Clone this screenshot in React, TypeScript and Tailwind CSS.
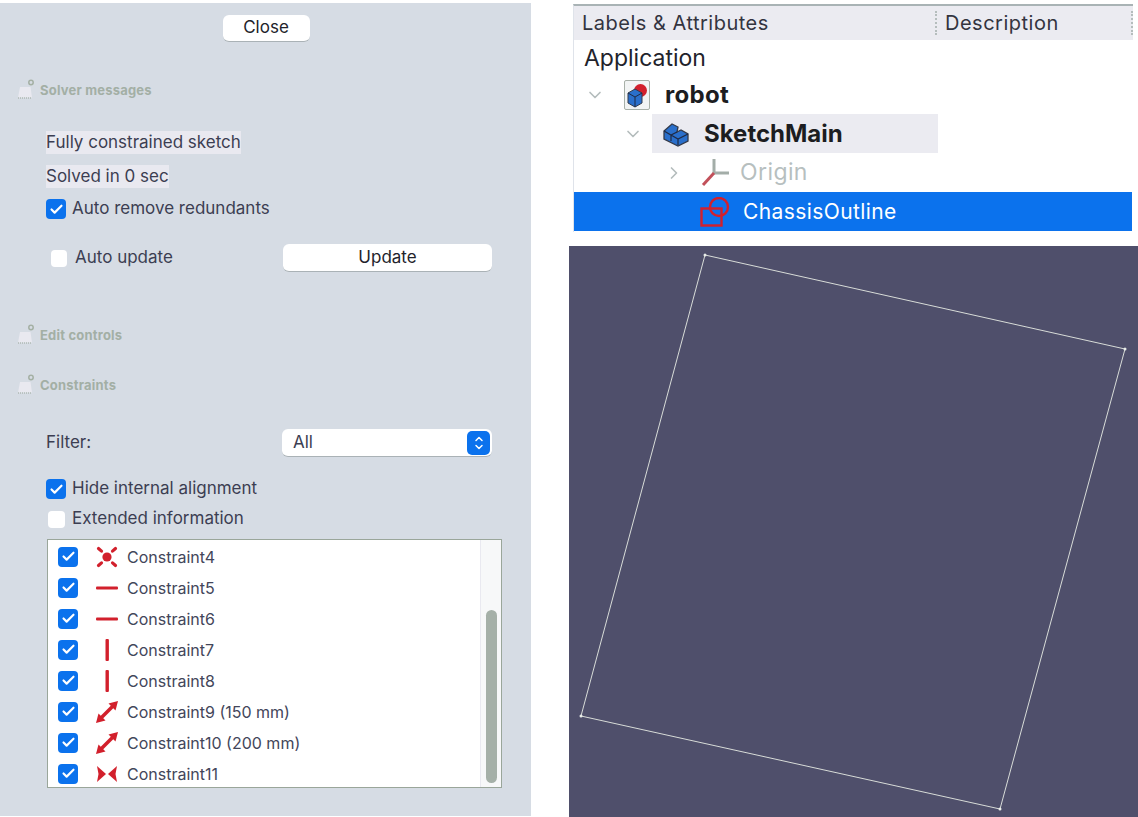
import { Check, ChevronDown, ChevronRight, ChevronUp } from 'lucide-react';

const constraints = [
  { name: 'Constraint4', icon: 'coincident' },
  { name: 'Constraint5', icon: 'horizontal' },
  { name: 'Constraint6', icon: 'horizontal' },
  { name: 'Constraint7', icon: 'vertical' },
  { name: 'Constraint8', icon: 'vertical' },
  { name: 'Constraint9 (150 mm)', icon: 'distance' },
  { name: 'Constraint10 (200 mm)', icon: 'distance' },
  { name: 'Constraint11', icon: 'symmetric' },
];

function ConstraintIcon({ type }: { type: string }) {
  return (
    <svg width="24" height="24" viewBox="0 0 24 24" className="shrink-0">
      {type === 'coincident' && (
        <g fill="#d2202c" stroke="#d2202c">
          <circle cx="12" cy="12" r="4.6" stroke="none" />
          <path d="M3.5 3.5l3 2.6M20.5 3.5l-3 2.6M3.5 20.5l3-2.6M20.5 20.5l-3-2.6" strokeWidth="3.2" strokeLinecap="round" />
        </g>
      )}
      {type === 'horizontal' && <rect x="1" y="10.5" width="22" height="3" rx="1" fill="#d2202c" />}
      {type === 'vertical' && <rect x="10.5" y="1" width="3.4" height="22" rx="1" fill="#d2202c" />}
      {type === 'distance' && (
        <g fill="#d2202c">
          <path d="M6 18L18 6" stroke="#d2202c" strokeWidth="3.6" />
          <path d="M23 1l-2.5 9.5-7-7z" />
          <path d="M1 23l2.5-9.5 7 7z" />
        </g>
      )}
      {type === 'symmetric' && (
        <g fill="#d2202c">
          <path d="M2 4l9 8-9 8 1.5-8z" />
          <path d="M22 4l-9 8 9 8-1.5-8z" />
        </g>
      )}
    </svg>
  );
}

function CheckBox({ checked, size = 'w-5 h-5' }: { checked: boolean; size?: string }) {
  if (!checked) return <div className={`${size} shrink-0 rounded-[4px] bg-white`} />;
  return (
    <div className={`${size} shrink-0 rounded-[4px] bg-[#0b72ed] flex items-center justify-center`}>
      <Check size={15} strokeWidth={3.4} color="#ffffff" />
    </div>
  );
}

function SectionHeader({ label, className }: { label: string; className: string }) {
  return (
    <div className={`flex items-end gap-[5px] pl-[17px] ${className}`}>
      <svg width="18" height="20" viewBox="0 0 18 20" className="shrink-0">
        <path d="M3 8h10.5L15 18.5H1z" fill="#e9e9f0" />
        <path d="M1 19h14" stroke="#9aa69a" strokeDasharray="1 1" />
        <circle cx="14" cy="3.5" r="2.2" fill="none" stroke="#a4b0a4" strokeWidth="1.5" />
      </svg>
      <span className="text-[13px] leading-[18px] font-bold tracking-[0.2px] text-[#a3afa5]">{label}</span>
    </div>
  );
}

function MacButton({ label, className }: { label: string; className: string }) {
  return (
    <div className={`flex items-center justify-center bg-white rounded-[6px] border-b border-[#aab2b6] text-[17px] text-[#22232b] ${className}`}>
      {label}
    </div>
  );
}

function LeftPanel() {
  return (
    <div className="w-[531px] h-[813px] mt-[3px] shrink-0 bg-[#d6dce4] bg-[radial-gradient(#e4e8ee_0.6px,transparent_0.7px)] bg-[length:6px_6px] text-[#3c3e52] text-[17px]">
      <div className="flex justify-center pt-[12px] pl-[1px]">
        <MacButton label="Close" className="w-[87px] h-[27px]" />
      </div>

      <SectionHeader label="Solver messages" className="mt-[37px]" />

      <div className="pl-[46px] mt-[32px]">
        <div className="w-fit h-[23px] leading-[23px] bg-[#e9e9f0]">Fully constrained sketch</div>
        <div className="w-fit h-[23px] leading-[23px] bg-[#e9e9f0] mt-[11px]">Solved in 0 sec</div>
        <div className="flex items-center gap-[6px] h-[20px] mt-[11px]">
          <CheckBox checked />
          <span>Auto remove redundants</span>
        </div>
      </div>

      <div className="flex items-center mt-[25px] pl-[51px] pr-[39px]">
        <CheckBox checked={false} size="w-[16px] h-[17px]" />
        <span className="ml-[8px]">Auto update</span>
        <MacButton label="Update" className="w-[209px] h-[28px] ml-auto" />
      </div>

      <SectionHeader label="Edit controls" className="mt-[52px]" />
      <SectionHeader label="Constraints" className="mt-[30px]" />

      <div className="flex items-center justify-between mt-[35px] pl-[46px] pr-[39px]">
        <span>Filter:</span>
        <div className="w-[210px] h-[28px] bg-white rounded-[6px] border-b border-[#aab2b6] flex items-center justify-between pl-[11px] pr-[2px]">
          <span>All</span>
          <div className="w-[23px] h-[24px] rounded-[5px] bg-[#0b72ed] flex flex-col items-center justify-center">
            <ChevronUp size={12} strokeWidth={3} color="#ffffff" className="-mb-[2px]" />
            <ChevronDown size={12} strokeWidth={3} color="#ffffff" className="-mt-[2px]" />
          </div>
        </div>
      </div>

      <div className="pl-[46px] mt-[22px]">
        <div className="flex items-center gap-[6px] h-[20px]">
          <CheckBox checked />
          <span>Hide internal alignment</span>
        </div>
        <div className="flex items-center gap-[7px] h-[18px] mt-[11px] pl-[2px]">
          <CheckBox checked={false} size="w-[17px] h-[17px]" />
          <span>Extended information</span>
        </div>
      </div>

      <div className="flex w-[455px] h-[249px] ml-[47px] mt-[11px] bg-white border border-[#9aa69a]">
        <div className="flex-1 pt-[1px] pl-[10px]">
          {constraints.map((c) => (
            <div key={c.name} className="flex items-center h-[31px] text-[16px] text-[#43465a]">
              <CheckBox checked />
              <div className="w-[48px] flex justify-center pl-[10px]">
                <ConstraintIcon type={c.icon} />
              </div>
              <span className="ml-[1px]">{c.name}</span>
            </div>
          ))}
        </div>
        <div className="w-[21px] h-full border-l border-[#e9e9f0] bg-[#f7f8f9] flex justify-center items-end pb-[4px]">
          <div className="w-[11px] h-[173px] rounded-full bg-[#a5b0a8]" />
        </div>
      </div>
    </div>
  );
}

function RobotIcon() {
  return (
    <div className="w-[26px] h-[30px] border border-[#a8b0a8] rounded-[2px] bg-[#f2f4f4] flex items-center justify-center shrink-0">
      <svg width="22" height="26" viewBox="0 0 22 26">
        <circle cx="14.5" cy="8.5" r="6.5" fill="#d2202c" />
        <path d="M2 11l7-4 7 4v10l-7 4-7-4z" fill="#2a6fcb" stroke="#333a4a" />
        <path d="M2 11l7 4 7-4M9 15v10" fill="none" stroke="#1f2a44" />
      </svg>
    </div>
  );
}

function SketchMainIcon() {
  return (
    <svg width="26" height="26" viewBox="0 0 26 26" className="shrink-0">
      <path d="M1 10l8-7 6 3-1 5 4-2 7 4v7l-10 5-14-7z" fill="#2a6fcb" stroke="#333a4a" strokeWidth="1.3" />
      <path d="M1 10l7 4 6-3M8 14l7 4 10-5M15 18v6M8 14v6" fill="none" stroke="#1f2a44" strokeWidth="1.2" />
    </svg>
  );
}

function OriginIcon() {
  return (
    <svg width="30" height="30" viewBox="0 0 30 30" className="shrink-0">
      <path d="M13 15V1" stroke="#a3ada8" strokeWidth="3" />
      <path d="M13 15h15" stroke="#a3ada8" strokeWidth="3" />
      <path d="M13 15L2 27" stroke="#c2505a" strokeWidth="3" />
    </svg>
  );
}

function SketchIcon() {
  return (
    <svg width="30" height="30" viewBox="0 0 30 30" className="shrink-0">
      <rect x="1.5" y="11.5" width="20" height="17" fill="none" stroke="#d2202c" strokeWidth="2.4" />
      <circle cx="19" cy="10" r="9" fill="none" stroke="#d2202c" strokeWidth="2.4" />
    </svg>
  );
}

function TreePanel() {
  return (
    <div className="ml-[4px] mr-[5px] mt-[4px] h-[228px] border-t-2 border-l border-t-[#a9b3b5] border-l-[#dfe3ea] text-[21px] text-[#22232b]">
      <div className="flex items-center h-[34px] bg-[#ebebf1] text-[20px] tracking-[0.5px] text-[#33343f]">
        <div className="w-[363px] h-[24px] pl-[8px] leading-[24px] border-r-2 border-dotted border-[#b5bdbd]">Labels &amp; Attributes</div>
        <div className="flex-1 h-[24px] pl-[8px] leading-[24px] border-r-2 border-dotted border-[#b5bdbd]">Description</div>
      </div>
      <div className="h-[35px] pl-[10px] pt-[2px] text-[23px] leading-[33px]">Application</div>
      <div className="flex items-center h-[39px] pl-[11px]">
        <ChevronDown size={20} color="#b4bcbc" strokeWidth={2} />
        <div className="ml-[19px]"><RobotIcon /></div>
        <span className="ml-[15px] text-[24px] font-bold tracking-[0.3px] text-[#1c1d21]">robot</span>
      </div>
      <div className="flex items-center h-[39px] pl-[49px]">
        <ChevronDown size={20} color="#b4bcbc" strokeWidth={2} />
        <div className="flex items-center w-[286px] h-full bg-[#ebebf1] ml-[9px] pl-[11px]">
          <SketchMainIcon />
          <span className="ml-[15px] text-[24px] font-bold text-[#1c1d21]">SketchMain</span>
        </div>
      </div>
      <div className="flex items-center h-[39px] pl-[90px]">
        <ChevronRight size={20} color="#b4bcbc" strokeWidth={2} />
        <div className="ml-[17px]"><OriginIcon /></div>
        <span className="ml-[9px] text-[#b7bfbf] tracking-[0.4px] text-[23px]">Origin</span>
      </div>
      <div className="flex items-center h-[39px] mr-[1px] pl-[126px] bg-[#0b72ed]">
        <SketchIcon />
        <span className="ml-[13px] text-white tracking-[0.4px] text-[21px]">ChassisOutline</span>
      </div>
    </div>
  );
}

function SketchView() {
  return (
    <div className="h-[571px] mt-[14px] bg-[#4f4f6b]">
      <svg width="569" height="571" viewBox="0 0 569 571" className="block">
        <polygon points="136,9 556,103 431,563 12,470" fill="none" stroke="#d8dcd8" strokeWidth="1" />
        {[[136, 9], [556, 103], [431, 563], [12, 470]].map(([x, y]) => (
          <circle key={x} cx={x} cy={y} r="1.5" fill="#e8ece8" />
        ))}
      </svg>
    </div>
  );
}

export default function App() {
  return (
    <div className="flex w-[1138px] h-[817px] bg-white overflow-hidden font-['Inter',sans-serif]">
      <LeftPanel />
      <div className="w-[569px] ml-[38px] shrink-0">
        <TreePanel />
        <SketchView />
      </div>
    </div>
  );
}
